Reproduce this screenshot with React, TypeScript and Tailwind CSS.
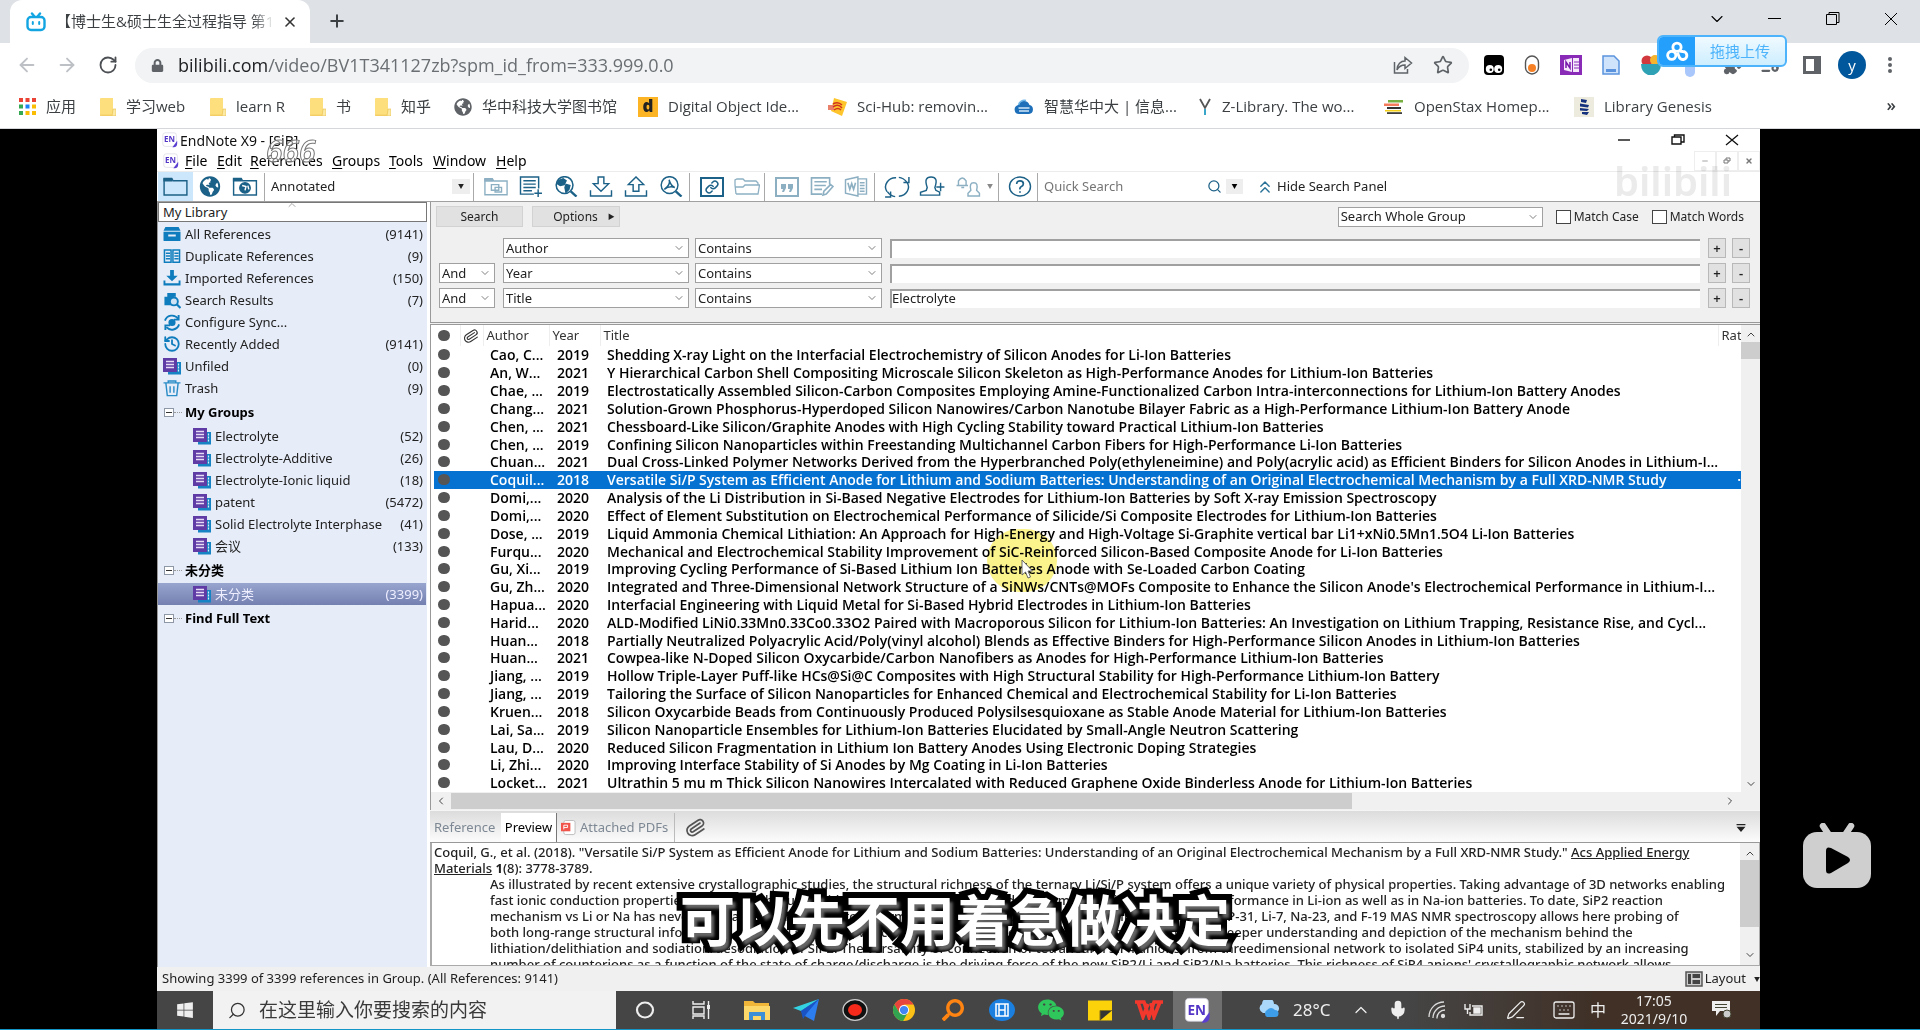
import React from "react";
import {
  ArrowLeft, ArrowRight, RotateCw, Star, X, Plus, Minus, ChevronDown, ChevronUp, ChevronLeft, ChevronRight,
  Paperclip, Search, Link as LinkIcon, Mic, PenLine, Puzzle, ListMusic, Keyboard, ChevronsUp, History,
} from "lucide-react";
import { FaGlobeAmericas, FaWindows, FaLock, FaWeixin, FaSearch } from "react-icons/fa";

type SvgProps = { className?: string };

const TvFavicon = ({ className }: SvgProps) => (
  <svg viewBox="0 0 20 20" className={className} fill="none" stroke="#12a5e2" strokeWidth="2.4" strokeLinecap="round">
    <rect x="1.5" y="5" width="17" height="13" rx="3.5" />
    <path d="M6 1.5 8 4M14 1.5 12 4" />
    <path d="M6.8 10v2M13.2 10v2" strokeWidth="2" />
  </svg>
);

const BookmarkFolder = () => (
  <svg viewBox="0 0 16 18" className="h-[18px] w-4 shrink-0">
    <path d="M0 1q0-1 1-1h12v13h3v5H1.500Q0 18 0 16.500Z" fill="#fddf7e" />
    <path d="M13 11h3v5.500q0 1.500-1.500 1.500H12Z" fill="#fbe9a4" stroke="#e8c04a" strokeWidth=".6" />
    <path d="M0 17.200h12" stroke="#efc75a" />
  </svg>
);

const AppsGrid = () => (
  <svg viewBox="0 0 17 17" className="h-[17px] w-[17px] shrink-0">
    {["#ea4335", "#ea4335", "#ea4335", "#34a853", "#1a83f5", "#fbbc04", "#34a853", "#fbbc04", "#fbbc04"].map((c, i) => (
      <rect key={i} x={(i % 3) * 6.5} y={Math.floor(i / 3) * 6.5} width="4" height="4" fill={c} />
    ))}
  </svg>
);

const SciHub = () => (
  <svg viewBox="0 0 20 18" className="h-[18px] w-5 shrink-0">
    <path d="m7 0 13 4-5 14-11-5Z" fill="#fdc52b" />
    <path d="M1 7h6v5H1z" fill="#e9806a" />
    <path d="M6 6q5-3 9 1M6 9q5-4 9 1M7 12q4-3 7 0" stroke="#d0341c" strokeWidth="1.500" fill="none" />
  </svg>
);

const CloudCampus = () => (
  <svg viewBox="0 0 20 16" className="h-4 w-5 shrink-0">
    <path d="M5 15a4.500 4.500 0 0 1-.8-8.900A6 6 0 0 1 15.500 6 4.600 4.600 0 0 1 15 15Z" fill="#1c6fb8" />
    <path d="M4.500 9h11M5 12h10" stroke="#cfe6f7" strokeWidth="1.500" />
    <path d="M4.500 6A6 6 0 0 1 12 1.500" stroke="#6fb6e8" strokeWidth="1.500" fill="none" />
  </svg>
);

const ZLib = () => (
  <svg viewBox="0 0 14 18" className="h-[18px] w-3.5 shrink-0" fill="none">
    <path d="m2 1 5 9 5-9" stroke="#555" strokeWidth="1.800" />
    <path d="M7 11v6" stroke="#39a5c9" strokeWidth="2" />
  </svg>
);

const OpenStax = () => (
  <svg viewBox="0 0 20 15" className="h-[15px] w-5 shrink-0">
    <path d="M4 1h15v2.500H4z" fill="#77af42" />
    <path d="M0 4.500h15V7H0z" fill="#f47a5c" />
    <path d="M3 8h14v2H3z" fill="#333" />
    <path d="M1 11h16v1.500H1z" fill="#f4d019" />
    <path d="M3 13.200h15V15H3z" fill="#3d3d3d" />
  </svg>
);

const LibGen = () => (
  <svg viewBox="0 0 20 20" className="h-5 w-5 shrink-0">
    <path d="M0 0h20v20H0z" fill="#ecebdd" />
    <path d="M7 2l6 1-1 3-5-1ZM6 6.500l9 1.500-1 2.500-8-1ZM6 11l9 1-2 2-7-.5ZM8 15h7l-2 3-5-1Z" fill="#15317e" />
  </svg>
);

const Pan = () => (
  <svg viewBox="0 0 24 22" className="h-[21px] w-6" fill="none" stroke="#fff" strokeWidth="3">
    <circle cx="12" cy="6.500" r="4.300" />
    <circle cx="6.500" cy="15" r="4.300" />
    <path d="M14.500 10.500 18 11a4.200 4.200 0 1 1-4 5l-1.500-4" />
  </svg>
);

const EnBadge = ({ className }: SvgProps) => (
  <svg viewBox="0 0 20 20" className={className}>
    <rect x="1" y="1" width="17" height="17" rx="3" fill="#fff" stroke="#c9c9d6" strokeWidth=".6" />
    <path d="M19 11v3.500q0 4.500-4.500 4.500H13Z" fill="#5b3fd0" />
    <text x="9.500" y="13" fontSize="10" fontWeight="700" textAnchor="middle" fill="#5436c6" fontFamily="Open Sans, sans-serif">EN</text>
  </svg>
);

const FolderLine = ({ className, children }: { className?: string; children?: React.ReactNode }) => (
  <svg viewBox="0 0 26 20" className={className} fill="none" stroke="currentColor" strokeWidth="1.500">
    <path d="M1 19V1.500h8l1.500 2.500H25V19Z" />
    <path d="M1 2h8v2H1z" fill="currentColor" />
    {children}
  </svg>
);

const GroupIcon = () => (
  <svg viewBox="0 0 18 17" className="h-[17px] w-[18px] shrink-0">
    <path d="M5 4h13v12.500H5z" fill="#1583c4" />
    <path d="M15.500 5.500v9" stroke="#dbeaf8" strokeWidth="1.200" strokeDasharray="2 1" />
    <path d="M0 0h14v14H0z" fill="#5f3ba6" />
    <path d="M3 3.500h8M3 6.500h8M3 9.500h8" stroke="#e6dcf6" strokeWidth="1.500" />
  </svg>
);

const sideIcons: Record<string, React.ReactNode> = {
  all: <path fillRule="evenodd" d="M2 1h14l2 4H0ZM0 6h18v9q0 1-1 1H1q-1 0-1-1Zm5 3v2h8V9Z" fill="#0f7dbd" />,
  dup: (
    <g fill="none" stroke="#0f7dbd" strokeWidth="1.600">
      <path d="M1 2h7v13H1zM10 2h7v13h-7z" />
      <path d="M2.500 5.500H7M2.500 8.500H7M2.500 11.500H7M11.500 5.500H16M11.500 8.500H16M11.500 11.500H16" />
    </g>
  ),
  imp: <path d="M7 0h4v6h4L9 12 3 6h4ZM0 11h2v3h14v-3h2v5.500H0Z" fill="#0f7dbd" />,
  res: (
    <g>
      <path d="M4 1h9v4h-2v9H1V5h3Z" fill="#0f7dbd" />
      <circle cx="11" cy="10" r="4.200" fill="#cfe3f5" stroke="#0f7dbd" strokeWidth="2" />
      <path d="m14 13 4 4" stroke="#0f7dbd" strokeWidth="2.400" />
    </g>
  ),
  sync: (
    <g fill="none" stroke="#0f7dbd" strokeWidth="2">
      <path d="M1.500 7a8 8 0 0 1 14-2M16.500 11A8 8 0 0 1 3 14" />
      <path d="M16 1v5h-5M2 17v-5h5" />
      <circle cx="9" cy="9" r="2.800" fill="#0f7dbd" />
    </g>
  ),
  trash: (
    <g fill="none" stroke="#2a8cc6" strokeWidth="1.500">
      <path d="M0 3h18M5 3V1h8v2M2.500 3l1.500 13.500h10L15.500 3M7 6.500v7M11 6.500v7" />
    </g>
  ),
};

const SideIcon = ({ kind }: { kind: string }) => {
  if (kind === "unfiled") return <GroupIcon />;
  if (kind === "recent") return <History className="h-[18px] w-[18px] text-[#0f7dbd]" strokeWidth={2.4} />;
  return <svg viewBox="0 0 18 18" className="h-[17px] w-[18px]">{sideIcons[kind]}</svg>;
};

const library: [string, string, string][] = [
  ["all", "All References", "(9141)"],
  ["dup", "Duplicate References", "(9)"],
  ["imp", "Imported References", "(150)"],
  ["res", "Search Results", "(7)"],
  ["sync", "Configure Sync...", ""],
  ["recent", "Recently Added", "(9141)"],
  ["unfiled", "Unfiled", "(0)"],
  ["trash", "Trash", "(9)"],
];

const groups: [string, string][] = [
  ["Electrolyte", "(52)"],
  ["Electrolyte-Additive", "(26)"],
  ["Electrolyte-Ionic liquid", "(18)"],
  ["patent", "(5472)"],
  ["Solid Electrolyte Interphase", "(41)"],
  ["会议", "(133)"],
];

const refs: [string, string, string][] = [
  ["Cao, C...", "2019", "Shedding X-ray Light on the Interfacial Electrochemistry of Silicon Anodes for Li-Ion Batteries"],
  ["An, W...", "2021", "Y Hierarchical Carbon Shell Compositing Microscale Silicon Skeleton as High-Performance Anodes for Lithium-Ion Batteries"],
  ["Chae, ...", "2019", "Electrostatically Assembled Silicon-Carbon Composites Employing Amine-Functionalized Carbon Intra-interconnections for Lithium-Ion Battery Anodes"],
  ["Chang...", "2021", "Solution-Grown Phosphorus-Hyperdoped Silicon Nanowires/Carbon Nanotube Bilayer Fabric as a High-Performance Lithium-Ion Battery Anode"],
  ["Chen, ...", "2021", "Chessboard-Like Silicon/Graphite Anodes with High Cycling Stability toward Practical Lithium-Ion Batteries"],
  ["Chen, ...", "2019", "Confining Silicon Nanoparticles within Freestanding Multichannel Carbon Fibers for High-Performance Li-Ion Batteries"],
  ["Chuan...", "2021", "Dual Cross-Linked Polymer Networks Derived from the Hyperbranched Poly(ethyleneimine) and Poly(acrylic acid) as Efficient Binders for Silicon Anodes in Lithium-I..."],
  ["Coquil...", "2018", "Versatile Si/P System as Efficient Anode for Lithium and Sodium Batteries: Understanding of an Original Electrochemical Mechanism by a Full XRD-NMR Study"],
  ["Domi,...", "2020", "Analysis of the Li Distribution in Si-Based Negative Electrodes for Lithium-Ion Batteries by Soft X-ray Emission Spectroscopy"],
  ["Domi,...", "2020", "Effect of Element Substitution on Electrochemical Performance of Silicide/Si Composite Electrodes for Lithium-Ion Batteries"],
  ["Dose, ...", "2019", "Liquid Ammonia Chemical Lithiation: An Approach for High-Energy and High-Voltage Si-Graphite vertical bar Li1+xNi0.5Mn1.5O4 Li-Ion Batteries"],
  ["Furqu...", "2020", "Mechanical and Electrochemical Stability Improvement of SiC-Reinforced Silicon-Based Composite Anode for Li-Ion Batteries"],
  ["Gu, Xi...", "2019", "Improving Cycling Performance of Si-Based Lithium Ion Batteries Anode with Se-Loaded Carbon Coating"],
  ["Gu, Zh...", "2020", "Integrated and Three-Dimensional Network Structure of a SiNWs/CNTs@MOFs Composite to Enhance the Silicon Anode's Electrochemical Performance in Lithium-I..."],
  ["Hapua...", "2020", "Interfacial Engineering with Liquid Metal for Si-Based Hybrid Electrodes in Lithium-Ion Batteries"],
  ["Harid...", "2020", "ALD-Modified LiNi0.33Mn0.33Co0.33O2 Paired with Macroporous Silicon for Lithium-Ion Batteries: An Investigation on Lithium Trapping, Resistance Rise, and Cycl..."],
  ["Huan...", "2018", "Partially Neutralized Polyacrylic Acid/Poly(vinyl alcohol) Blends as Effective Binders for High-Performance Silicon Anodes in Lithium-Ion Batteries"],
  ["Huan...", "2021", "Cowpea-like N-Doped Silicon Oxycarbide/Carbon Nanofibers as Anodes for High-Performance Lithium-Ion Batteries"],
  ["Jiang, ...", "2019", "Hollow Triple-Layer Puff-like HCs@Si@C Composites with High Structural Stability for High-Performance Lithium-Ion Battery"],
  ["Jiang, ...", "2019", "Tailoring the Surface of Silicon Nanoparticles for Enhanced Chemical and Electrochemical Stability for Li-Ion Batteries"],
  ["Kruen...", "2018", "Silicon Oxycarbide Beads from Continuously Produced Polysilsesquioxane as Stable Anode Material for Lithium-Ion Batteries"],
  ["Lai, Sa...", "2019", "Silicon Nanoparticle Ensembles for Lithium-Ion Batteries Elucidated by Small-Angle Neutron Scattering"],
  ["Lau, D...", "2020", "Reduced Silicon Fragmentation in Lithium Ion Battery Anodes Using Electronic Doping Strategies"],
  ["Li, Zhi...", "2020", "Improving Interface Stability of Si Anodes by Mg Coating in Li-Ion Batteries"],
  ["Locket...", "2021", "Ultrathin 5 mu m Thick Silicon Nanowires Intercalated with Reduced Graphene Oxide Binderless Anode for Lithium-Ion Batteries"],
];

const abstractLines = [
  "As illustrated by recent extensive crystallographic studies, the structural richness of the ternary Li/Si/P system offers a unique variety of physical properties. Taking advantage of 3D networks enabling",
  "fast ionic conduction properties, such phosphorus silicides provide negative electrode systems exhibiting attractive performance in Li-ion as well as in Na-ion batteries. To date, SiP2 reaction",
  "mechanism vs Li or Na has never been assessed in detail to determine the complex phases. The combination of ex situ P-31, Li-7, Na-23, and F-19 MAS NMR spectroscopy allows here probing of",
  "both long-range structural information and local structure, which brings together new insights into the system and a deeper understanding and depiction of the mechanism behind the",
  "lithiation/delithiation and sodiation/desodiation of SiP2. The versatility of connection of tetrahedral SiP4 anions, from threedimensional network to isolated SiP4 units, stabilized by an increasing",
  "number of counterions as a function of the state of charge/discharge is the driving force of the new SiP2/Li and SiP2/Na batteries. This richness of SiP4 anions' crystallographic network allows",
];

const Bookmark = ({ icon, label, className }: { icon: React.ReactNode; label: string; className: string }) => (
  <a href="#" className={"flex shrink-0 items-center gap-2.5 whitespace-nowrap " + className}>
    {icon}
    <span className="truncate">{label}</span>
  </a>
);

const Sep = () => <span className="h-7 w-px shrink-0 bg-[#a9a9a9]" />;

const Combo = ({ value, label, className }: { value: string; label: string; className: string }) => (
  <label className={"relative block h-[20px] shrink-0 " + className}>
    <select aria-label={label} defaultValue={value} className="block h-full w-full appearance-none border border-[#a0a0a0] bg-white pl-0.5 text-[13px] leading-[17px] text-[#222]">
      <option>{value}</option>
    </select>
    <ChevronDown className="pointer-events-none absolute top-1 right-1 h-3 w-3 text-[#555]" strokeWidth={1.5} />
  </label>
);

const SmallButton = ({ children, label }: { children: React.ReactNode; label: string }) => (
  <button aria-label={label} className="h-5 w-[18px] border border-[#b8b8b8] bg-[#e1e1e1] text-[13px] leading-4 font-semibold">{children}</button>
);

const Chrome = () => (
  <header className="bg-white">
    <div className="flex h-[43px] items-start bg-[#dee1e6] pl-2.5">
      <div className="flex h-[43px] w-[300px] items-center rounded-t-xl bg-white pr-3 pl-4">
        <TvFavicon className="h-5 w-5 shrink-0" />
        <span className="ml-2.5 flex-1 overflow-hidden bg-gradient-to-r from-[#3c4043] from-90% to-white bg-clip-text text-[15px] whitespace-nowrap text-transparent">【博士生&amp;硕士生全过程指导 第1</span>
        <button aria-label="Close tab" className="ml-2 text-[#333]"><X className="h-4 w-4" strokeWidth={2.4} /></button>
      </div>
      <button aria-label="New tab" className="mt-[11px] ml-[17px] text-[#3c4043]"><Plus className="h-5 w-5" strokeWidth={2.4} /></button>
      <div className="ml-auto flex h-[38px] items-center gap-[38px] pr-[19px] text-black">
        <button aria-label="Tab search"><ChevronDown className="h-5 w-5" strokeWidth={1.3} /></button>
        <button aria-label="Minimize"><svg viewBox="0 0 20 20" className="h-5 w-5"><path d="M3 9.500h13" stroke="#000" /></svg></button>
        <button aria-label="Restore"><svg viewBox="0 0 20 20" className="h-5 w-5" fill="none" stroke="#000"><path d="M3.500 5.500h10v10h-10zM6 5.500v-2h10v10h-2" /></svg></button>
        <button aria-label="Close"><svg viewBox="0 0 20 20" className="h-5 w-5" fill="none" stroke="#000"><path d="m4 4 12 12M16 4 4 16" /></svg></button>
      </div>
    </div>
    <div className="flex h-[44px] items-center pl-4">
      <button aria-label="Back" className="text-[#bdc1c6]"><ArrowLeft className="h-[22px] w-[22px]" /></button>
      <button aria-label="Forward" className="ml-[18px] text-[#bdc1c6]"><ArrowRight className="h-[22px] w-[22px]" /></button>
      <button aria-label="Reload" className="ml-5 text-[#4c5054]"><RotateCw className="h-5 w-5" strokeWidth={2.2} /></button>
      <div className="ml-[17px] flex h-[35px] flex-1 items-center rounded-full bg-[#f1f3f4] px-4">
        <FaLock className="h-[13px] w-[13px] text-[#5f6368]" />
        <div className="ml-3.5 flex-1 text-[18px] leading-[26px] text-[#6b6f73]"><span className="text-[#202124]">bilibili.com</span>/video/BV1T341127zb?spm_id_from=333.999.0.0</div>
        <button aria-label="Share" className="text-[#5f6368]">
          <svg viewBox="0 0 20 20" className="h-5 w-5" fill="none" stroke="currentColor" strokeWidth="1.500"><path d="M1.500 7v11h13v-4M4 15c0-6 4-9 8-9V2.500L18.500 8 12 13.500V10c-4 0-6 1-8 5Z" /></svg>
        </button>
        <button aria-label="Bookmark" className="ml-5 text-[#5f6368]"><Star className="h-5 w-5" strokeWidth={2} /></button>
      </div>
      <div className="flex w-[451px] shrink-0 items-center pl-[13px]">
        <svg viewBox="0 0 20 20" className="ml-0.5 h-5 w-5"><rect width="20" height="20" rx="4" fill="#000" /><circle cx="5.800" cy="14" r="4" fill="#fff" /><circle cx="14.200" cy="14" r="4" fill="#fff" /><circle cx="6.800" cy="14.800" r="1.300" /><circle cx="15.200" cy="14.800" r="1.300" /></svg>
        <svg viewBox="0 0 16 20" className="ml-5 h-5 w-4"><rect x="1.500" y="1" width="13" height="18" rx="6.500" fill="#fff" stroke="#555" strokeWidth="1.400" /><circle cx="8" cy="13" r="4" fill="#f58025" /></svg>
        <svg viewBox="0 0 22 20" className="ml-5 h-5 w-[22px]"><path d="M0 0h22v20H0z" fill="#8a2bb8" /><path d="M13 3h6v14h-6zM4 5l8-2v14l-8-2Z" fill="#f4e8fa" /><path d="M6 13V7l4 6V7" stroke="#7719aa" strokeWidth="1.500" fill="none" /><path d="M14 7h5M14 10h5M14 13h5" stroke="#8a2bb8" /></svg>
        <svg viewBox="0 0 18 20" className="ml-5 h-5 w-[18px]"><path d="M1 1h11l5 5v13H1Z" fill="#cfe3fb" stroke="#5b94dd" strokeWidth="1.500" /><path d="M4 14h10v3H4z" fill="#5b94dd" /></svg>
        <svg viewBox="0 0 20 20" className="ml-[21px] h-5 w-5"><circle cx="6" cy="6" r="5.500" fill="#d2393f" /><circle cx="14" cy="5" r="5" fill="#f6b42c" /><path d="M0 9h20q0 8-7 11H7Q0 17 0 9Z" fill="#2fa1b4" /></svg>
        <span className="mt-1 ml-6 h-5 w-2.5 rounded-full bg-[#a9c7fb]" />
        <Puzzle className="ml-7 h-5 w-5 fill-[#5f6368] text-[#5f6368]" />
        <ListMusic className="ml-[17px] h-5 w-5 text-[#5f6368]" strokeWidth={2.6} />
        <svg viewBox="0 0 18 18" className="ml-[23px] h-[18px] w-[18px]"><path d="M1.500 1.500h15v15h-15Z" fill="#fff" stroke="#5f6368" strokeWidth="3" /><path d="M11 0h7v18h-7z" fill="#5f6368" /></svg>
        <button className="ml-[17px] h-7 w-7 shrink-0 rounded-full bg-[#01579b] text-[15px] leading-6 text-white">y</button>
        <svg viewBox="0 0 6 18" className="ml-[21px] h-[18px] w-1.5 shrink-0" fill="#5f6368"><circle cx="3" cy="3" r="2" /><circle cx="3" cy="9" r="2" /><circle cx="3" cy="15" r="2" /></svg>
      </div>
    </div>
    <nav className="flex h-[42px] items-center border-b border-[#d5d7da] pb-0.5 pl-[19px] text-[15px] text-[#3c4043]">
      <Bookmark className="w-[81px]" icon={<AppsGrid />} label="应用" />
      <Bookmark className="w-[110px]" icon={<BookmarkFolder />} label="学习web" />
      <Bookmark className="w-[100px]" icon={<BookmarkFolder />} label="learn R" />
      <Bookmark className="w-[65px]" icon={<BookmarkFolder />} label="书" />
      <Bookmark className="w-[79px]" icon={<BookmarkFolder />} label="知乎" />
      <Bookmark className="w-[184px]" icon={<FaGlobeAmericas className="h-[18px] w-[18px] shrink-0 text-[#5f6368]" />} label="华中科技大学图书馆" />
      <Bookmark className="w-[189px]" icon={<span className="flex h-5 w-5 items-center justify-center bg-[#fcb425] pb-0.5 text-[17px] font-extrabold text-[#222]">d</span>} label="Digital Object Ide..." />
      <Bookmark className="w-[187px]" icon={<SciHub />} label="Sci-Hub: removin..." />
      <Bookmark className="w-[184px]" icon={<CloudCampus />} label="智慧华中大 | 信息..." />
      <Bookmark className="w-[186px]" icon={<ZLib />} label="Z-Library. The wo..." />
      <Bookmark className="w-[190px]" icon={<OpenStax />} label="OpenStax Homep..." />
      <Bookmark className="w-[150px]" icon={<LibGen />} label="Library Genesis" />
      <button aria-label="More bookmarks" className="mr-6 mb-1 ml-auto text-[17px] font-semibold">»</button>
    </nav>
  </header>
);

const MenuBar = () => (
  <div className="flex h-5 items-center pl-1.5 text-[14px] leading-5">
    <EnBadge className="mr-1.5 h-4 w-4" />
    {[["F", "ile", "w-8"], ["E", "dit", "w-[33px]"], ["R", "eferences", "w-[82px]"], ["G", "roups", "w-[57px]"], ["T", "ools", "w-11"], ["W", "indow", "w-[63px]"], ["H", "elp", "w-10"]].map(([a, b, w]) => (
      <button key={a} className={"text-left whitespace-nowrap " + w}><span className="underline underline-offset-2">{a}</span>{b}</button>
    ))}
    <div className="ml-auto flex h-full text-[#777]">
      <button aria-label="Minimize document" className="flex w-[22px] items-center justify-center border border-[#eee]"><Minus className="h-2 w-2" /></button>
      <button aria-label="Restore document" className="flex w-[22px] items-center justify-center border border-[#eee]"><svg viewBox="0 0 8 8" className="h-2 w-2" fill="none" stroke="#777"><path d="M1 3h4v3H1zM3 3V1h4v3H5" /></svg></button>
      <button aria-label="Close document" className="flex w-[22px] items-center justify-center border border-[#eee]"><X className="h-2 w-2" strokeWidth={4} /></button>
    </div>
  </div>
);

const Toolbar = () => (
  <div className="flex h-[31px] items-center border-t border-b border-t-[#ececec] border-b-[#a0a0a0] pl-px text-[#1c6187]">
    <button aria-label="Local library" className="flex h-[29px] w-[35px] items-center justify-center bg-[#cce6fb]"><FolderLine className="h-[19px] w-[25px]" /></button>
    <button aria-label="Online search" className="ml-[5px]"><FaGlobeAmericas className="h-[21px] w-6" /></button>
    <button aria-label="Integrated library" className="ml-2.5"><FolderLine className="h-[19px] w-[26px]"><circle cx="13" cy="11.500" r="5.500" fill="#1c6187" /><path d="m10 9 4 1-1 4M16 9l1 4" stroke="#fff" /></FolderLine></button>
    <span className="w-1.5" /><Sep />
    <label className="flex w-[208px] items-center justify-between pr-[3px] pl-1.5 text-[13px] text-[#222]">
      <select aria-label="Output style" className="flex-1 appearance-none"><option>Annotated</option></select>
      <span className="flex h-[15px] w-[18px] items-center justify-center bg-[#eee] text-[6px]">▼</span>
    </label>
    <Sep />
    <div className="flex w-[215px] items-center justify-between pr-1.5 pl-2.5">
      <button aria-label="Copy to library" className="opacity-50"><FolderLine className="h-[19px] w-6"><path d="M8 8h8v6H8zM12 11h7v5h-7z" /></FolderLine></button>
      <button aria-label="New reference"><svg viewBox="0 0 24 22" className="h-[21px] w-6" fill="none" stroke="currentColor" strokeWidth="1.500"><path d="M15 19H1V1h19v12M4 5h13M4 8.500h13M4 12h13M4 15.500h9M19.500 14v8M15.500 18h8" /></svg></button>
      <button aria-label="Search online"><svg viewBox="0 0 24 22" className="h-[21px] w-6" fill="none" stroke="currentColor" strokeWidth="1.600"><circle cx="10.500" cy="9.500" r="8.800" /><path d="m17 16 6 5.500" strokeWidth="2.500" /><path d="M4 5l5-2 3 2-2 4-4 1-3-2ZM12 9l4 1-1 4-3 3-1-5Z" fill="currentColor" /></svg></button>
      <button aria-label="Import"><svg viewBox="0 0 24 22" className="h-[21px] w-6" fill="none" stroke="currentColor" strokeWidth="1.500"><path d="M9 1h6v7h5l-8 8-8-8h5ZM1 15v6h22v-6" /></svg></button>
      <button aria-label="Export"><svg viewBox="0 0 24 22" className="h-[21px] w-6" fill="none" stroke="currentColor" strokeWidth="1.500"><path d="M9 16h6V9h5l-8-8-8 8h5ZM1 15v6h22v-6" /></svg></button>
      <button aria-label="Find full text"><svg viewBox="0 0 24 22" className="h-[21px] w-6" fill="none" stroke="currentColor" strokeWidth="1.500"><circle cx="10.500" cy="9.500" r="8.800" /><path d="m17 16 6 5.500" strokeWidth="2.500" /><path d="M10 4q2 5-5 10 5-4 11-2-4-1-6-8Z" /></svg></button>
    </div>
    <Sep />
    <div className="flex w-[74px] items-center justify-between pr-1 pl-2.5">
      <button aria-label="Open link" className="flex h-5 w-6 items-center justify-center border-2 border-[#1c6187]"><LinkIcon className="h-3.5 w-3.5" strokeWidth={2.6} /></button>
      <button aria-label="Open file" className="opacity-50"><svg viewBox="0 0 26 17" className="h-[17px] w-[26px]" fill="none" stroke="currentColor" strokeWidth="1.300"><path d="M2 16 1 7V2l2-1h6l2 2h11l2 2v2M2 16h22l1.500-9H11L9 9H1" /></svg></button>
    </div>
    <Sep />
    <div className="flex w-[109px] items-center justify-between pr-1.5 pl-2.5 opacity-50">
      <button aria-label="Insert citation" className="h-5 w-6 border-2 border-[#1c6187]"><svg viewBox="0 0 20 16" className="h-4 w-5" fill="currentColor"><path d="M4 5h5v4l-2 4H5l1-3H4ZM11 5h5v4l-2 4h-2l1-3h-2Z" /></svg></button>
      <button aria-label="Format bibliography"><svg viewBox="0 0 24 22" className="h-[21px] w-6" fill="none" stroke="currentColor" strokeWidth="1.700"><path d="M12 19H1V2h19v7M4 6h13M4 10h12M4 14h8M13 20l1-4 7-7 2.500 2-7 8Z" /></svg></button>
      <button aria-label="Go to Word"><svg viewBox="0 0 24 22" className="h-[21px] w-6" fill="none" stroke="currentColor" strokeWidth="1.500"><path d="M1 4 14 1v20L1 18ZM14 3h9v16h-9M16 7h5M16 10h5M16 13h5M16 16h5" /><path d="m3.500 7 2 7 2-6 2 6 2-7" strokeWidth="1.700" /></svg></button>
    </div>
    <Sep />
    <div className="flex w-[123px] items-center pl-2">
      <button aria-label="Sync"><svg viewBox="0 0 28 24" className="h-[22px] w-7" fill="none" stroke="currentColor" strokeWidth="1.600"><path d="M25 7a11 10 0 0 1-9 15M3 17A11 10 0 0 1 13 2M16 1.500q5 .5 8.500 5M12 22.500Q7 22 3.500 17" /><path d="M27 1v6h-6M1 23h6v-6" /></svg></button>
      <button aria-label="Share library" className="ml-2"><svg viewBox="0 0 26 22" className="h-[21px] w-[26px]" fill="none" stroke="currentColor" strokeWidth="1.500"><path d="M8 12Q4 1 12 1t4 11l1 3 4 2v3H1v-3l6-2ZM22 7v9M17.500 11.500H26" /></svg></button>
      <button aria-label="Activity" className="ml-2.5 opacity-50"><svg viewBox="0 0 26 22" className="h-[21px] w-[26px]" fill="none" stroke="currentColor" strokeWidth="1.500"><path d="M1 10h12M3 10V5q4-6 8 0v5M6 12h3M16 15q-2-8 3-8t3 8l3 3v3H13v-3Z" /></svg></button>
      <span className="ml-1.5 text-[6px] text-[#888]">▼</span>
    </div>
    <Sep />
    <button aria-label="Help" className="mr-[5px] ml-[9px]"><svg viewBox="0 0 24 22" className="h-[21px] w-6" fill="none" stroke="currentColor" strokeWidth="1.500"><ellipse cx="12" cy="11" rx="11" ry="10" /><path d="M8.500 8.500q0-3.500 3.500-3.500t3.500 3q0 2-2 3t-1.500 3M12 16v1.500" strokeWidth="1.800" /></svg></button>
    <Sep />
    <input aria-label="Quick Search" placeholder="Quick Search" className="w-[169px] pl-1.5 text-[13px] placeholder:text-[#757575]" />
    <Search className="h-[15px] w-[15px]" />
    <button aria-label="Search options" className="ml-1 h-[15px] w-[17px] bg-[#eee] text-[6px] text-black">▼</button>
    <button className="ml-3 flex items-center gap-0.5 text-[13px] text-[#222]"><ChevronsUp className="h-5 w-5 text-[#2a7298]" strokeWidth={1.7} />Hide Search Panel</button>
  </div>
);

const GroupHeader = ({ label }: { label: string }) => (
  <div className="flex h-[26px] items-center pl-1.5 font-bold text-black">
    <button aria-label={"Collapse " + label} className="flex h-[9px] w-2.5 items-center justify-center border border-[#8d97a5] bg-white"><span className="h-px w-1.5 bg-[#333]" /></button>
    <span className="w-2 border-t border-dotted border-[#999]" />
    <span className="ml-[3px]">{label}</span>
  </div>
);

const GroupRow = ({ label, count, active }: { label: string; count: string; active?: boolean }) => (
  <a href="#" className={"flex h-[22px] items-center pr-[3px] pl-[35px] " + (active ? "bg-gradient-to-b from-[#98a5ce] to-[#7480b0] text-[#eef]" : "")}>
    <GroupIcon />
    <span className="ml-1 flex-1 whitespace-nowrap">{label}</span>
    <span>{count}</span>
  </a>
);

const Sidebar = () => (
  <aside className="w-[270px] shrink-0 border-l border-[#999] bg-[#e6ecf8] text-[13px] leading-[18px] text-[#222]">
    <div className="relative h-5 border border-[#777] bg-white pl-1 leading-[19px]">
      My Library
      <ChevronUp className="absolute -top-1 left-[127px] h-3 w-3 text-[#888]" strokeWidth={1.500} />
    </div>
    <div className="pt-px pr-px">
      {library.map(([k, l, c]) => (
        <a href="#" key={l} className="flex h-[22px] items-center pr-[3px] pl-[5px]">
          <SideIcon kind={k} />
          <span className="ml-1 flex-1">{l}</span>
          <span>{c}</span>
        </a>
      ))}
      <GroupHeader label="My Groups" />
      {groups.map(([l, c]) => <GroupRow key={l} label={l} count={c} />)}
      <GroupHeader label="未分类" />
      <GroupRow label="未分类" count="(3399)" active />
      <GroupHeader label="Find Full Text" />
    </div>
  </aside>
);

const SearchPanel = () => (
  <section className="h-[121px] border-b border-l border-[#999] bg-[#f0f0f0] pr-2.5 pl-[5px] text-[13px] text-[#222]">
    <div className="flex items-center pt-1">
      <button className="h-[21px] w-[87px] border border-[#d2d2d2] bg-[#e1e1e1] text-xs leading-4">Search</button>
      <button className="ml-[9px] flex h-[21px] w-[88px] items-center justify-center gap-2.5 border border-[#d2d2d2] bg-[#e1e1e1] pl-4 text-xs leading-4">Options <span className="text-[7px]">▶</span></button>
      <div className="ml-auto"><Combo value="Search Whole Group" label="Search scope" className="w-[205px]" /></div>
      <label className="ml-[13px] flex w-[83px] items-center gap-[3px] text-xs whitespace-nowrap"><input type="checkbox" className="h-3.5 w-[15px] appearance-none border border-[#444] bg-white" />Match Case</label>
      <label className="mr-1.5 ml-[13px] flex items-center gap-[3px] text-xs whitespace-nowrap"><input type="checkbox" className="h-3.5 w-[15px] appearance-none border border-[#444] bg-white" />Match Words</label>
    </div>
    <div className="mt-[11px] flex flex-col gap-[5px]">
      {["Author", "Year", "Title"].map((f, i) => (
        <div key={f} className="flex items-center">
          {i === 0 ? <span className="ml-[3px] w-[56px]" /> : <Combo value="And" label="Operator" className="ml-[3px] w-[56px]" />}
          <Combo value={f} label="Field" className="ml-2 w-[186px]" />
          <Combo value="Contains" label="Comparison" className="ml-1.5 w-[187px]" />
          <input aria-label={f + " text"} defaultValue={i === 2 ? "Electrolyte" : ""} className="ml-2 h-[19px] flex-1 border-t-2 border-l-2 border-[#a0a0a0] border-b-[#eee] bg-white" />
          <span className="w-2" />
          <SmallButton label="Add row">+</SmallButton>
          <span className="w-1.5" />
          <SmallButton label="Remove row">-</SmallButton>
        </div>
      ))}
    </div>
  </section>
);

const ReferenceList = () => (
  <section className="relative mt-px border-t border-l border-[#999] bg-white text-[14px] leading-[17px]">
    <div className="flex">
      <div className="min-w-0 flex-1 overflow-hidden pl-[3px]">
        <table className="w-full table-fixed border-collapse text-left">
          <colgroup><col className="w-[26px]" /><col className="w-[23px]" /><col className="w-[66px]" /><col className="w-[51px]" /><col /><col className="w-[23px]" /></colgroup>
          <thead>
            <tr className="h-[21px] text-[13px] text-[#333]">
              <th><span className="ml-1 block h-[11px] w-3 rounded-full bg-[#555]" /></th>
              <th className="border-l border-[#eee]"><Paperclip className="ml-0.5 h-4 w-4 rotate-12" strokeWidth={1.700} /></th>
              <th className="border-l border-[#eee] pl-[3px] font-normal">Author</th>
              <th className="border-l border-[#eee] pl-[3px] font-normal">Year</th>
              <th className="border-l border-[#eee] pl-[3px] font-normal">Title</th>
              <th className="overflow-hidden border-l border-[#eee] pl-[3px] font-normal">Rati</th>
            </tr>
          </thead>
        </table>
        <table className="h-[446px] w-full table-fixed border-collapse text-left font-['Open_Sans',sans-serif]">
          <colgroup><col className="w-[52px]" /><col className="w-[67px]" /><col className="w-[50px]" /><col /><col className="w-[23px]" /></colgroup>
          <tbody>
            {refs.map(([a, y, t], i) => (
              <tr key={t} className={i === 7 ? "bg-[#0572d2] font-semibold whitespace-nowrap text-white" : "font-semibold whitespace-nowrap text-black"}>
                <td className="p-0"><span className="ml-1 block h-[11px] w-3 rounded-full bg-[#555]" /></td>
                <td className="p-0 pl-1">{a}</td>
                <td className="p-0 pl-1">{y}</td>
                <td className="overflow-hidden p-0 pl-1">{t}</td>
                <td className="p-0 text-right">{i === 7 ? "·" : ""}</td>
              </tr>
            ))}
          </tbody>
        </table>
      </div>
      <div className="flex w-[19px] shrink-0 flex-col items-center bg-[#f0f0f0] text-[#444]">
        <ChevronUp className="mt-0.5 h-[15px] w-3" />
        <div className="h-[17px] w-full bg-[#cdcdcd]" />
        <ChevronDown className="mt-auto mb-0.5 h-3 w-3" />
      </div>
    </div>
    <div className="flex h-[18px] items-center bg-[#f0f0f0] pr-6 text-[#444]">
      <ChevronLeft className="mx-1 h-3 w-3" />
      <div className="flex-1"><div className="h-4 w-[71%] bg-[#cdcdcd]" /></div>
      <ChevronRight className="ml-1 h-3 w-3" />
    </div>
    <div className="pointer-events-none absolute top-[204px] left-[556px] h-[63px] w-[70px] rounded-full bg-[#fbf38c] mix-blend-multiply" />
    <svg viewBox="0 0 12 20" className="pointer-events-none absolute top-[234px] left-[590px] h-5 w-3"><path d="M1 1v15l3.500-3 2.500 6 2.500-1L7 12h4.500Z" fill="#fff" stroke="#555" strokeWidth=".9" /></svg>
  </section>
);

const Preview = () => (
  <section className="text-[13px] text-[#222]">
    <div className="flex h-[33px] items-end border-t border-b border-t-[#f5f5f5] border-b-[#999] bg-gradient-to-b from-[#dcdcdc] to-[#fcfcfc] text-[#7d8894]">
      <button className="h-[29px] w-[71px] pl-1 text-left">Reference</button>
      <button className="h-[29px] w-[56px] border-r border-[#777] bg-white text-center text-black">Preview</button>
      <button className="flex h-[29px] w-[118px] items-center gap-1 border-r border-[#bbb] pl-1 whitespace-nowrap">
        <svg viewBox="0 0 16 17" className="h-4 w-[15px] shrink-0"><rect x="3" y=".5" width="12" height="15" rx="2" fill="#fff" stroke="#bbb" /><path d="M0 3h10v9H0z" fill="#f0544a" /><path d="M3 10V5.500h4v2.500H3" stroke="#fff" fill="none" /></svg>
        Attached PDFs
      </button>
      <Paperclip className="mb-1 ml-2.5 h-[21px] w-[21px] rotate-12 text-[#555]" />
      <svg viewBox="0 0 10 9" className="mr-3.5 mb-2.5 ml-auto h-2 w-2.5"><path d="M0 0h10v1.500H0zM0 3h10L5 9Z" fill="#222" /></svg>
    </div>
    <div className="flex h-[123px] border-r border-b border-l-2 border-[#aaa] bg-white">
      <div className="min-w-0 flex-1 overflow-hidden pt-px pl-0.5 leading-4 font-medium whitespace-nowrap">
        <p>Coquil, G., et al. (2018). "Versatile Si/P System as Efficient Anode for Lithium and Sodium Batteries: Understanding of an Original Electrochemical Mechanism by a Full XRD-NMR Study." <u>Acs Applied Energy </u></p>
        <p><u>Materials</u> <b>1</b>(8): 3778-3789.</p>
        <div className="pl-14">{abstractLines.map((l) => <p key={l}>{l}</p>)}</div>
      </div>
      <div className="flex w-[19px] shrink-0 flex-col items-center bg-[#f0f0f0] text-[#444]">
        <ChevronUp className="mt-1 h-[13px] w-3" />
        <div className="h-[67px] w-full bg-[#cdcdcd]" />
        <ChevronDown className="mt-auto mb-1 h-3 w-3" />
      </div>
    </div>
  </section>
);

const TaskIcon = ({ children, label }: { children: React.ReactNode; label: string }) => (
  <button aria-label={label} className="flex h-full w-[49px] shrink-0 items-center justify-center">{children}</button>
);

const Taskbar = () => (
  <footer className="flex h-[38px] items-stretch bg-gradient-to-r from-[#454545] from-78% to-[#403026] to-90% text-[#eee]">
    <button aria-label="Start" className="flex w-14 items-center justify-center"><FaWindows className="h-[18px] w-5" /></button>
    <label className="flex w-[403px] items-center gap-3 bg-[#f2f2f2] pl-3.5 text-[#333]">
      <Search className="h-[19px] w-5 -scale-x-100" strokeWidth={1.600} />
      <input aria-label="Search" placeholder="在这里输入你要搜索的内容" className="w-[330px] text-[19px] placeholder:text-[#3a3a3a]" />
    </label>
    <div className="flex w-[113px] justify-between pr-1 pl-1">
      <TaskIcon label="Cortana"><svg viewBox="0 0 20 18" className="h-[18px] w-5"><ellipse cx="10" cy="9" rx="8" ry="7.500" fill="none" stroke="#eee" strokeWidth="2.200" /></svg></TaskIcon>
      <TaskIcon label="Task view"><svg viewBox="0 0 20 18" className="h-[18px] w-5" fill="none" stroke="#eee" strokeWidth="1.400"><path d="M2 0v3h11V0M2 6h11v7H2zM2 18v-3h11v3M17.500 0v18" /><path d="M16 4h3v4h-3z" fill="#eee" stroke="none" /></svg></TaskIcon>
    </div>
    <div className="flex pl-[3px]">
      <TaskIcon label="File Explorer"><svg viewBox="0 0 26 20" className="h-5 w-[26px]"><path d="M0 1h9l2 2h14v17H0z" fill="#f0b63a" /><path d="M0 6h26v14H0z" fill="#fcd769" /><path d="M5 12h16v8h-4v-4H9v4H5z" fill="#3a8fd6" /></svg></TaskIcon>
      <TaskIcon label="Messenger"><svg viewBox="0 0 26 22" className="h-[22px] w-[26px]"><path d="M26 0 0 9l8 3Z" fill="#34d3e4" /><path d="M26 0 8 12l2 4 11 6Z" fill="#2c7df0" /><path d="M26 0 8 12l2 8 4-6Z" fill="#1a53c4" /></svg></TaskIcon>
      <TaskIcon label="Recorder"><svg viewBox="0 0 26 22" className="h-[22px] w-[26px]"><ellipse cx="13" cy="11" rx="12" ry="10.300" fill="#111" stroke="#ccc" strokeWidth="1.300" /><ellipse cx="13" cy="11" rx="7" ry="6" fill="#f52a1a" /></svg></TaskIcon>
      <TaskIcon label="Chrome"><svg viewBox="0 0 26 24" className="h-[22px] w-[26px]"><circle cx="13" cy="12" r="12" fill="#fbc116" /><path d="M2.600 6A12 12 0 0 1 23.400 6H13L8 15Z" fill="#e8453c" /><path d="M2.600 6A12 12 0 0 0 12 24l5-9H8Z" fill="#32a350" /><circle cx="13" cy="12" r="5.500" fill="#fff" /><circle cx="13" cy="12" r="4.500" fill="#4285f4" /></svg></TaskIcon>
      <TaskIcon label="Everything"><FaSearch className="h-[22px] w-6 -scale-x-100 text-[#ff8411]" /></TaskIcon>
      <TaskIcon label="Video"><svg viewBox="0 0 26 22" className="h-[22px] w-[26px]"><ellipse cx="13" cy="11" rx="13" ry="11" fill="#1b7fe0" /><path d="M7 5h12v12H7zM10 5v12M16 5v12M10 11h6" fill="none" stroke="#fff" strokeWidth="1.500" /></svg></TaskIcon>
      <TaskIcon label="WeChat"><FaWeixin className="h-6 w-7 text-[#2fc65b]" /></TaskIcon>
      <TaskIcon label="Notes"><svg viewBox="0 0 24 20" className="h-[21px] w-6"><path d="M0 0h24v20H0z" fill="#fcd20b" /><path d="M12 20V10h12Z" fill="#333" /><path d="M12 20V10h12" fill="none" stroke="#8a7311" /></svg></TaskIcon>
      <TaskIcon label="WPS"><svg viewBox="0 0 28 20" className="h-5 w-7" fill="none" stroke="#f2382d" strokeWidth="3.500"><path d="M0 2h9l5 15 5-15h9M3 2l5 15 5-13M16 3l3 14 6-15" /></svg></TaskIcon>
      <div className="flex bg-[#6f6f6f]"><TaskIcon label="EndNote"><EnBadge className="h-[27px] w-[27px]" /></TaskIcon></div>
    </div>
    <div className="ml-auto flex items-center">
      <svg viewBox="0 0 24 20" className="h-5 w-6"><path d="M6 13A5 5 0 0 1 5 4a6 6 0 0 1 12 0 4.500 4.500 0 0 1 1 9Z" fill="#a9d8fb" /><path d="M10 17a4 4 0 0 1 0-7q4-4 8 0a3.500 3.500 0 0 1 0 7Z" fill="#3d9de8" /></svg>
      <span className="ml-3 w-[58px] text-[17px]">28°C</span>
      <ChevronUp className="h-5 w-5" strokeWidth={1.500} />
      <Mic className="ml-[17px] h-5 w-5 fill-current" />
      <svg viewBox="0 0 18 18" className="ml-5 h-[18px] w-[18px]" fill="none" stroke="#ddd" strokeWidth="1.300"><path d="M1 16A15 15 0 0 1 16 1M5 17A12 12 0 0 1 17 5M9 17.500A8 8 0 0 1 17 9" /><circle cx="15" cy="15" r="1.500" fill="#ddd" /></svg>
      <svg viewBox="0 0 20 14" className="ml-[18px] h-3.5 w-5" fill="none" stroke="#eee" strokeWidth="1.400"><path d="M8 3h10v9H6V9M1 1v5h5V1M3.500 6v5" /><path d="M10 5h6v5h-6z" fill="#eee" /></svg>
      <PenLine className="ml-[22px] h-5 w-5" strokeWidth={1.500} />
      <Keyboard className="ml-6 h-6 w-7" strokeWidth={1.300} />
      <span className="ml-3 text-[16px]">中</span>
      <div className="ml-3 w-[72px] text-center text-[14px] leading-[18px]">17:05<br />2021/9/10</div>
      <svg viewBox="0 0 20 18" className="mr-7 ml-[22px] h-[18px] w-5"><path d="M0 0h18v10H8l-4 5v-5H0Z" fill="#eee" /><path d="M3 3.500h12M3 6.500h12" stroke="#443" /><circle cx="15" cy="13" r="4" fill="#ccc" stroke="#443" /></svg>
    </div>
  </footer>
);

export default function App() {
  return (
    <div className="relative flex min-h-screen flex-col bg-black font-['Open_Sans','Noto_Sans_CJK_SC',sans-serif]">
      <Chrome />
      <main className="relative flex flex-1 flex-col pr-40 pl-[157px]">
        <div className="relative flex flex-1 flex-col bg-white font-['Noto_Sans','Noto_Sans_CJK_SC',sans-serif]">
          <div className="flex h-[22px] items-center pl-[5px] text-[14px] text-[#111]">
            <EnBadge className="mr-0.5 h-4 w-4" />
            EndNote X9 - [SiB]
            <div className="ml-auto flex items-center gap-[34px] pr-[18px]">
              <button aria-label="Minimize window"><svg viewBox="0 0 20 20" className="h-5 w-5"><path d="M4 10h12" stroke="#111" strokeWidth="1.400" /></svg></button>
              <button aria-label="Restore window"><svg viewBox="0 0 20 20" className="h-5 w-5" fill="none" stroke="#111" strokeWidth="1.400"><path d="M4 7h9v7H4zM6.500 7V5H16v7h-3" /></svg></button>
              <button aria-label="Close window"><svg viewBox="0 0 20 20" className="h-5 w-5" fill="none" stroke="#111" strokeWidth="1.300"><path d="m4 5 12 10M16 5 4 15" /></svg></button>
            </div>
          </div>
          <MenuBar />
          <Toolbar />
          <div className="pointer-events-none absolute top-[6px] left-[109px] text-[30px] leading-8 font-semibold text-white/50 italic [-webkit-text-stroke:1px_#777]">666</div>
          <div className="pointer-events-none absolute top-[24px] right-7 text-[40px] leading-[56px] font-semibold text-[#ebebeb] mix-blend-multiply">bilibili</div>
          <div className="flex flex-1">
            <Sidebar />
            <div className="ml-[3px] flex min-w-0 flex-1 flex-col bg-[#f0f0f0]">
              <SearchPanel />
              <ReferenceList />
              <Preview />
            </div>
          </div>
          <div className="flex h-6 items-center bg-[#f0f0f0] pl-[5px] text-[13px] text-[#222]">
            Showing 3399 of 3399 references in Group. (All References: 9141)
            <button className="ml-auto flex items-center gap-0.5">
              <svg viewBox="0 0 18 16" className="h-4 w-[18px]"><path d="M1 1h16v14H1z" fill="#ccc" stroke="#555" strokeWidth="1.500" /><path d="M3 3h3v10H3zM7.500 3H15v4H7.500zM7.500 9H15v4H7.500z" fill="#444" /></svg>
              Layout <span className="ml-1.5 text-[6px]">▼</span>
            </button>
          </div>
          <Taskbar />
          <p className="pointer-events-none absolute bottom-[76px] left-[523px] font-['Noto_Sans_CJK_SC',sans-serif] text-[55px] leading-[72px] font-bold whitespace-nowrap text-white [-webkit-text-stroke:12px_#000] [paint-order:stroke_fill] [text-shadow:3px_4px_3px_#666]">可以先不用着急做决定</p>
        </div>
        <button aria-label="Play" className="absolute right-[49px] bottom-[140px]">
          <svg viewBox="0 0 68 66" className="h-[66px] w-[68px]"><path d="m20 3 6 9M48 3l-6 9" stroke="#cfcfcf" strokeWidth="6.500" strokeLinecap="round" /><rect y="9" width="68" height="56" rx="14" fill="#cfcfcf" /><path d="M23 28q0-5 5-3l17 9q4 3 0 6l-17 10q-5 2-5-3Z" fill="#000" /></svg>
        </button>
      </main>
      <div className="h-px bg-[#1296c8]" />
      <div className="absolute top-[35px] right-[133px] flex h-8 w-[130px] items-center overflow-hidden rounded-md border-2 border-[#4db4fb] bg-gradient-to-b from-[#f0faff] to-[#cdeeff]">
        <span className="flex h-full w-9 items-center justify-center bg-[#259ffc]"><Pan /></span>
        <button className="flex-1 text-[15px] text-[#4db4fb]">拖拽上传</button>
      </div>
    </div>
  );
}
